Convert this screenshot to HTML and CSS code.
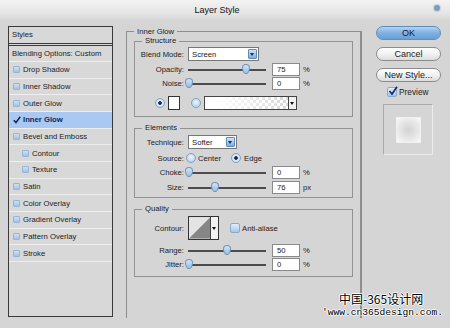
FILE: index.html
```html
<!DOCTYPE html>
<html lang="en">
<head>
    <meta charset="UTF-8">
    <meta name="viewport" content="width=device-width, initial-scale=1.0">
    <title>Layer Style</title>
    <link rel="stylesheet" href="styles.css">
</head>
<body>
    <div class="dialog">
        <div class="titlebar">Layer Style<span class="close"></span></div>

        <div class="content">
            <div class="styles">
                <div class="styles-head">Styles</div>
                <div class="styles-blend">Blending Options: Custom</div>
                <div class="style-item"><span class="box"></span>Drop Shadow</div>
                <div class="style-item"><span class="box"></span>Inner Shadow</div>
                <div class="style-item"><span class="box"></span>Outer Glow</div>
                <div class="style-item active">
                    <svg class="tick" width="8" height="8" viewBox="0 0 8 8"><path d="M0.8 4.2 L3 6.6 L7.2 0.8" fill="none" stroke="#14265a" stroke-width="1.6"/></svg>Inner Glow
                </div>
                <div class="style-item"><span class="box"></span>Bevel and Emboss</div>
                <div class="style-item sub"><span class="box"></span>Contour</div>
                <div class="style-item sub"><span class="box"></span>Texture</div>
                <div class="style-item"><span class="box"></span>Satin</div>
                <div class="style-item"><span class="box"></span>Color Overlay</div>
                <div class="style-item"><span class="box"></span>Gradient Overlay</div>
                <div class="style-item"><span class="box"></span>Pattern Overlay</div>
                <div class="style-item"><span class="box"></span>Stroke</div>
            </div>

            <fieldset class="panel">
                <legend>Inner Glow</legend>

                <fieldset class="group structure">
                    <legend>Structure</legend>
                    <div class="row">
                        <label>Blend Mode:</label>
                        <div class="select screen">Screen<span class="drop"></span></div>
                    </div>
                    <div class="row slide first">
                        <label>Opacity:</label>
                        <div class="slider"><div class="track"><span class="thumb" style="left: 75%"></span></div></div>
                        <div class="num">75</div><span class="unit">%</span>
                    </div>
                    <div class="row slide">
                        <label>Noise:</label>
                        <div class="slider"><div class="track"><span class="thumb" style="left: 0%"></span></div></div>
                        <div class="num">0</div><span class="unit">%</span>
                    </div>
                    <div class="row colors">
                        <span class="radio on"></span>
                        <span class="swatch"></span>
                        <span class="radio second"></span>
                        <div class="gradient"><span class="grad-fill"></span><span class="grad-arrow"></span></div>
                    </div>
                </fieldset>

                <fieldset class="group elements">
                    <legend>Elements</legend>
                    <div class="row">
                        <label>Technique:</label>
                        <div class="select softer">Softer<span class="drop"></span></div>
                    </div>
                    <div class="row source">
                        <label>Source:</label>
                        <span class="radio"></span><span class="opt">Center</span>
                        <span class="radio on edge"></span><span class="opt">Edge</span>
                    </div>
                    <div class="row slide">
                        <label>Choke:</label>
                        <div class="slider"><div class="track"><span class="thumb" style="left: 0%"></span></div></div>
                        <div class="num">0</div><span class="unit">%</span>
                    </div>
                    <div class="row slide">
                        <label>Size:</label>
                        <div class="slider"><div class="track"><span class="thumb" style="left: 34%"></span></div></div>
                        <div class="num">76</div><span class="unit">px</span>
                    </div>
                </fieldset>

                <fieldset class="group quality">
                    <legend>Quality</legend>
                    <div class="row contour-row">
                        <label>Contour:</label>
                        <div class="contour">
                            <svg width="22" height="22" viewBox="0 0 22 22"><rect width="22" height="22" fill="#e4e4e4"/><polygon points="0,22 22,0 22,22" fill="#868686"/></svg>
                            <span class="grad-arrow"></span>
                        </div>
                        <span class="check"></span><span class="opt">Anti-aliase</span>
                    </div>
                    <div class="row slide range">
                        <label>Range:</label>
                        <div class="slider"><div class="track"><span class="thumb" style="left: 50%"></span></div></div>
                        <div class="num">50</div><span class="unit">%</span>
                    </div>
                    <div class="row slide">
                        <label>Jitter:</label>
                        <div class="slider"><div class="track"><span class="thumb" style="left: 0%"></span></div></div>
                        <div class="num">0</div><span class="unit">%</span>
                    </div>
                </fieldset>
            </fieldset>

            <div class="side">
                <div class="btn ok">OK</div>
                <div class="btn">Cancel</div>
                <div class="btn">New Style...</div>
                <div class="preview-row">
                    <span class="check">
                        <svg width="10" height="10" viewBox="0 0 10 10"><path d="M1.5 5 L4 8 L9 0.8" fill="none" stroke="#16306a" stroke-width="1.7"/></svg>
                    </span>Preview
                </div>
                <div class="preview"><div class="preview-swatch"></div></div>
            </div>
        </div>

        <div class="watermark">
            <div class="wm-cn">中国-365设计网</div>
            <div class="wm-url">'www.cn365design.com.</div>
        </div>
    </div>
</body>
</html>
```

FILE: styles.css
```css
body {
    margin: 0;
    background: #d5d5d5;
    font-family: "Liberation Sans", Arial, sans-serif;
    font-size: 7.7px;
    color: #222;
}

.dialog {
    position: relative;
    width: 450px;
    height: 328px;
    overflow: hidden;
}

/* title bar */

.titlebar {
    position: relative;
    height: 20px;
    line-height: 20px;
    padding-right: 16px;
    text-align: center;
    font-size: 9px;
    color: #111;
    background: linear-gradient(#f3f3f3, #e4e4e4 70%, #d6d6d6);
}

.close {
    position: absolute;
    top: 5px;
    right: 10px;
    width: 6px;
    height: 6px;
    border-radius: 50%;
    background: #7f9dbd;
    box-shadow: 0 0 0 1px #c8d5e3;
}

.content {
    display: flex;
    align-items: flex-start;
    padding: 6px 0 0 8px;
}

/* styles list */

.styles {
    width: 105px;
    height: 291px;
    box-sizing: border-box;
    border: 1px solid #3a3a3a;
    background: #d8d8d8;
    margin-right: 13px;
    flex: none;
}

.styles-head {
    height: 16px;
    line-height: 16px;
    padding-left: 3px;
    border-bottom: 3px double #3a3a3a;
}

.styles-blend {
    height: 15px;
    line-height: 15px;
    padding-left: 3px;
    border-bottom: 1px solid #eeeeee;
}

.style-item {
    display: flex;
    align-items: center;
    height: 15.67px;
    padding-left: 4px;
    border-bottom: 1px solid #eeeeee;
}

.style-item.sub {
    padding-left: 13px;
}

.style-item .box {
    width: 7px;
    height: 7px;
    box-sizing: border-box;
    margin-right: 3px;
    border: 1px solid #93b5d8;
    border-radius: 1px;
    background: linear-gradient(#cfe0f1, #a2c2e3);
}

.style-item.active {
    background: #a9c9f2;
    color: #14265a;
    font-weight: bold;
}

.tick {
    margin-right: 2px;
}

/* main panel */

fieldset {
    margin: 0;
    min-width: 0;
}

.panel {
    width: 236px;
    height: 291px;
    box-sizing: border-box;
    margin-top: 1px;
    padding: 0 7px;
    border: 1px solid #8e8e8e;
    border-right-width: 2px;
    border-bottom: none;
    flex: none;
}

.panel > legend {
    padding: 0 3px;
    line-height: 9px;
}

.group {
    padding: 0;
    border: 1px solid #929292;
}

.group > legend {
    margin-left: 7px;
    padding: 0 3px;
    line-height: 10px;
}

.structure {
    padding: 1px 0 6px;
}

.elements {
    margin-top: 6px;
    padding: 2px 0 3px;
}

.quality {
    margin-top: 6px;
    padding: 2px 0 5px;
}

.row {
    display: flex;
    align-items: center;
    height: 14px;
}

.row label {
    width: 49px;
    margin-right: 4px;
    text-align: right;
    flex: none;
}

.row.slide {
    height: 13px;
    margin-top: 1px;
}

.row.slide.first {
    margin-top: 2px;
}

.elements .row.slide {
    margin-top: 2px;
}

.row.range {
    margin-top: 4px;
}

/* dropdowns */

.select {
    display: flex;
    align-items: center;
    height: 14px;
    box-sizing: border-box;
    padding-left: 3px;
    border: 1px solid #777;
    background: #fff;
}

.select.screen {
    width: 71px;
}

.select.softer {
    width: 49px;
}

.drop {
    position: relative;
    margin-left: auto;
    margin-right: 1px;
    width: 9px;
    height: 10px;
    box-sizing: border-box;
    border: 1px solid #5f8bb8;
    border-radius: 1px;
    background: linear-gradient(#d2e4f5, #7faedc);
}

.drop::after {
    content: "";
    position: absolute;
    left: 1px;
    top: 3px;
    border-left: 2.5px solid transparent;
    border-right: 2.5px solid transparent;
    border-top: 3px solid #1c2c4c;
}

/* sliders */

.slider {
    width: 78px;
    height: 13px;
    flex: none;
    background: linear-gradient(#4c4c4c, #4c4c4c) 0 6px / 100% 2px no-repeat;
}

.track {
    position: relative;
    height: 100%;
    margin: 0 1px;
}

.thumb {
    position: absolute;
    top: 1px;
    margin-left: -4px;
    width: 8px;
    height: 10px;
    box-sizing: border-box;
    border: 1px solid #6f95bd;
    border-radius: 50% 50% 45% 45% / 35% 35% 65% 65%;
    background: linear-gradient(#d3e5f6, #98bde2);
}

.num {
    width: 28px;
    height: 13px;
    box-sizing: border-box;
    margin-left: 6px;
    padding-left: 4px;
    line-height: 11px;
    border: 1px solid #8a8a8a;
    background: #fff;
    flex: none;
}

.unit {
    margin-left: 3px;
}

/* radios and checks */

.radio {
    width: 10px;
    height: 10px;
    box-sizing: border-box;
    border: 1px solid #7fa4ca;
    border-radius: 50%;
    background: radial-gradient(circle at 50% 40%, #eef5fc, #a9c8e7);
    flex: none;
}

.radio.on {
    background: radial-gradient(circle, #1b2c50 0 1.5px, #e6f0fa 2.2px, #a9c8e7 100%);
}

.colors {
    margin-top: 6px;
    padding-left: 20px;
}

.swatch {
    width: 12px;
    height: 14px;
    box-sizing: border-box;
    margin-left: 3px;
    border: 1px solid #333;
    background: #fff;
}

.radio.second {
    margin-left: 11px;
}

.gradient {
    display: flex;
    width: 93px;
    height: 14px;
    box-sizing: border-box;
    margin-left: 3px;
    border: 1px solid #444;
}

.grad-fill {
    flex: 1;
    background:
        linear-gradient(to right, #fff 15%, rgba(255, 255, 255, 0) 95%),
        conic-gradient(#dadada 25%, #fff 0 50%, #dadada 0 75%, #fff 0) 0 0 / 6px 6px;
}

.grad-arrow {
    position: relative;
    width: 7px;
    border-left: 1px solid #444;
    background: #f2f2f2;
}

.grad-arrow::after {
    content: "";
    position: absolute;
    left: 1px;
    top: 50%;
    margin-top: -1px;
    border-left: 2.5px solid transparent;
    border-right: 2.5px solid transparent;
    border-top: 3px solid #111;
}

.source {
    height: 12px;
    margin-top: 3px;
}

.source label {
    margin-right: 2px;
}

.opt {
    margin-left: 2px;
}

.radio.edge {
    margin-left: 10px;
}

.source .radio.edge + .opt {
    margin-left: 3px;
}

.contour-row {
    height: 24px;
}

.contour {
    display: flex;
    width: 31px;
    height: 24px;
    box-sizing: border-box;
    border: 1px solid #333;
    flex: none;
}

.contour svg {
    display: block;
}

.check {
    position: relative;
    width: 10px;
    height: 10px;
    box-sizing: border-box;
    border: 1px solid #86aad0;
    border-radius: 2px;
    background: linear-gradient(#e2eefa, #a7c6e6);
    flex: none;
}

.contour-row .check {
    margin-left: 11px;
}

.check svg {
    position: absolute;
    left: 0;
    top: -2px;
}

/* right column */

.side {
    width: 65px;
    margin-left: 14px;
    flex: none;
    font-size: 9px;
}

.btn {
    height: 14px;
    box-sizing: border-box;
    margin-top: 7px;
    line-height: 12px;
    text-align: center;
    border: 1px solid #8c8c8c;
    border-radius: 7px;
    background: linear-gradient(#ffffff, #f1f1f1 50%, #dcdcdc);
    color: #1a1a1a;
}

.btn.ok {
    margin-top: 0;
    border-color: #5f8fbf;
    background: linear-gradient(#b3d3f1, #7fb0e0 50%, #6a9fd6);
    color: #10203c;
}

.preview-row {
    display: flex;
    align-items: center;
    height: 10px;
    margin-top: 5px;
    padding-left: 11px;
    font-size: 8.3px;
}

.preview-row .check {
    margin-right: 2px;
}

.preview {
    width: 50px;
    height: 51px;
    box-sizing: border-box;
    margin: 7px 0 0 7px;
    padding: 12px 0 0 12px;
    border: 1px solid;
    border-color: #a9a9a9 #ececec #ececec #a9a9a9;
}

.preview-swatch {
    width: 25px;
    height: 26px;
    box-sizing: border-box;
    border: 1px solid #f0f0f0;
    background: radial-gradient(circle, #d3d3d3, #e8e8e8 60%, #fafafa);
}

/* watermark */

.watermark {
    position: absolute;
    left: 322px;
    top: 290px;
    color: #000;
    text-shadow: 1px 0 #fff, -1px 0 #fff, 0 1px #fff, 0 -1px #fff;
}

.wm-cn {
    margin-left: 17px;
    font-family: "Noto Sans CJK SC", sans-serif;
    font-size: 12px;
    line-height: 17px;
}

.wm-url {
    font-family: "Liberation Mono", monospace;
    font-size: 9.6px;
    line-height: 12px;
}
```
